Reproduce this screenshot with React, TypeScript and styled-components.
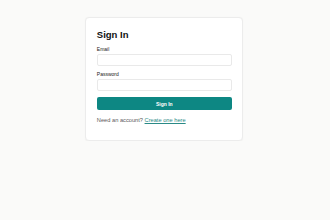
import React from "react";
import styled, { createGlobalStyle } from "styled-components";

const Global = createGlobalStyle`
  html, body { margin: 0; padding: 0; background: #fafaf9; }
  body { font-family: "Liberation Sans", Arial, sans-serif; }
  * { box-sizing: border-box; }
`;

const Page = styled.div`
  display: flex;
  justify-content: center;
  padding-top: 16.7px;
  padding-right: 1.4px;
`;

const Card = styled.div`
  width: 158px;
  background: #ffffff;
  border: 1px solid #ececec;
  border-radius: 4px;
  box-shadow: 0 0.5px 1.5px rgba(0, 0, 0, 0.04);
  padding: 11.2px 10.5px 16px;
  display: flex;
  flex-direction: column;
`;

const Title = styled.h1`
  margin: 0 0 6px;
  font-size: 9.5px;
  line-height: 11px;
  font-weight: 700;
  color: #111;
`;

const Field = styled.div<{ $gap?: number }>`
  display: flex;
  flex-direction: column;
  margin-bottom: ${(p) => p.$gap ?? 5}px;
`;

const Label = styled.label`
  font-size: 5px;
  line-height: 6px;
  color: #222;
  margin-bottom: 2.2px;
`;

const Input = styled.input`
  height: 12px;
  width: 100%;
  border: 1px solid #e9e9e9;
  border-radius: 2px;
  background: #fff;
  padding: 0 3px;
  font-size: 5px;
  outline: none;
`;

const Button = styled.button`
  height: 12.7px;
  width: 100%;
  border: none;
  border-radius: 2px;
  background: #0d8783;
  color: #fff;
  font-family: "Liberation Sans", Arial, sans-serif;
  font-weight: 700;
  font-size: 5px;
  padding: 0;
  margin-bottom: 7px;
`;

const Footer = styled.p`
  margin: 0;
  font-size: 5.7px;
  line-height: 7px;
  color: #5a5a5a;
`;

const Link = styled.a`
  color: #2a8a86;
  text-decoration: underline;
`;

export default function App() {
  return (
    <>
      <Global />
      <Page>
        <Card>
          <Title>Sign In</Title>
          <Field>
            <Label>Email</Label>
            <Input type="email" />
          </Field>
          <Field $gap={6}>
            <Label>Password</Label>
            <Input type="password" />
          </Field>
          <Button>Sign In</Button>
          <Footer>
            Need an account? <Link href="#">Create one here</Link>
          </Footer>
        </Card>
      </Page>
    </>
  );
}
